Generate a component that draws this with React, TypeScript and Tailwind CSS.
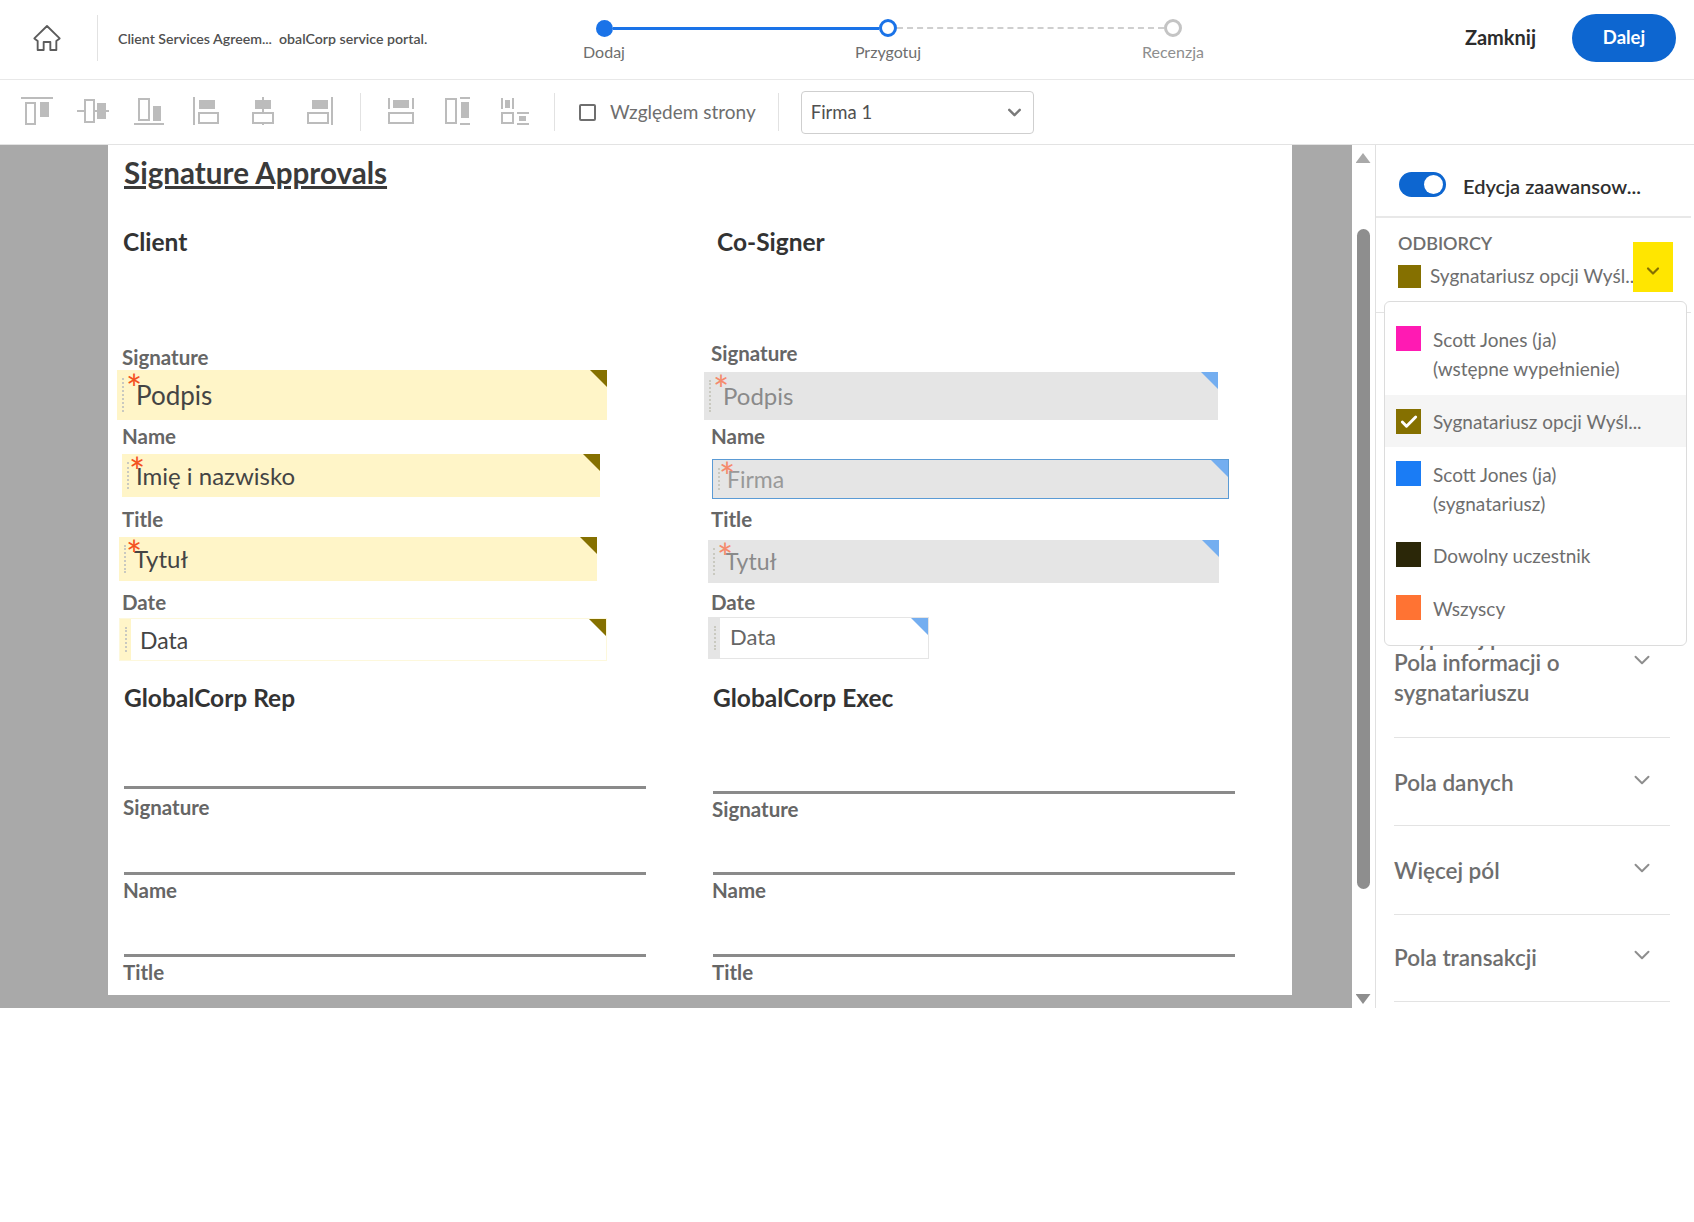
import { ChevronDown, Check } from "lucide-react";

const ui = "font-['Lato','Noto_Sans',sans-serif]";

function ToolIcon({ children }: { children: React.ReactNode }) {
  return (
    <svg width="32" height="28" viewBox="0 0 32 28" fill="none" stroke="#bcbcbc" strokeWidth="2">
      {children}
    </svg>
  );
}

const Solid = (p: { x: number; y: number; w: number; h: number }) => (
  <rect x={p.x} y={p.y} width={p.w} height={p.h} fill="#bcbcbc" stroke="none" />
);
const Outline = (p: { x: number; y: number; w: number; h: number }) => (
  <rect x={p.x} y={p.y} width={p.w} height={p.h} />
);

const toolIcons = [
  <>
    <path d="M0 1h32" />
    <Outline x={5} y={6} w={9} h={21} />
    <Solid x={19} y={5} w={9} h={15} />
  </>,
  <>
    <path d="M0 14h32" />
    <rect x={8} y={3} width={9} height={22} fill="#fff" />
    <Solid x={20} y={6} w={9} h={16} />
  </>,
  <>
    <path d="M1 27h30" />
    <Outline x={6} y={2} w={10} h={21} />
    <Solid x={20} y={9} w={8} h={15} />
  </>,
  <>
    <path d="M5 0v28" />
    <Solid x={10} y={3} w={16} h={9} />
    <Outline x={10} y={16} w={19} h={10} />
  </>,
  <>
    <path d="M18 0v3M18 12v4M18 26v2" />
    <Solid x={10} y={3} w={16} h={9} />
    <Outline x={8} y={16} w={20} h={10} />
  </>,
  <>
    <path d="M31 0v28" />
    <Solid x={11} y={3} w={16} h={9} />
    <Outline x={7} y={16} w={20} h={10} />
  </>,
  <>
    <path d="M4 1v11M28 1v11" />
    <Solid x={8} y={3} w={16} h={8} />
    <Outline x={4} y={16} w={24} h={10} />
  </>,
  <>
    <path d="M18 1h10M18 27h10" />
    <Outline x={4} y={2} w={10} h={24} />
    <Solid x={19} y={5} w={8} h={16} />
  </>,
  <>
    <path d="M3 1v11M14 1v11M18 27h12M18 16h12" />
    <Solid x={6} y={3} w={5} h={8} />
    <Outline x={3} y={16} w={11} h={10} />
    <Solid x={20} y={19} w={7} h={5} />
  </>,
];

type FieldProps = {
  text: string;
  place: string;
  tone: "yellow" | "gray" | "yellowOpen" | "grayOpen" | "selected";
  required?: boolean;
  size?: string;
  textPlace?: string;
  starPlace?: string;
};

function Field({ text, place, tone, required, size = "text-[24px]", textPlace = "ml-[19px]", starPlace = "left-[7px] top-[-2px]" }: FieldProps) {
  const isYellow = tone === "yellow" || tone === "yellowOpen";
  const bg = {
    yellow: "bg-[#fff5c8]",
    yellowOpen: "bg-white border border-[#fdf8dc]",
    gray: "bg-[#e5e5e5]",
    grayOpen: "bg-white border border-[#e5e5e5]",
    selected: "bg-[#e5e5e5] border border-[#5b9bd5]",
  }[tone];
  const ink = isYellow ? "text-[#444]" : tone === "grayOpen" ? "text-[#666]" : tone === "gray" ? "text-[#8a8a8a]" : "text-[#999]";
  return (
    <div className={`relative flex items-center shrink-0 ${bg} ${place}`}>
      {(tone === "yellowOpen" || tone === "grayOpen") && (
        <div className={`absolute left-0 inset-y-0 w-[11px] ${tone === "yellowOpen" ? "bg-[#fff5c8]" : "bg-[#e5e5e5]"}`} />
      )}
      <div className="absolute left-[5px] top-[8px] bottom-[8px] border-l-2 border-dotted border-[#c9c9c0]" />
      <span className={`relative ${ui} ${size} ${ink} ${textPlace}`}>{text}</span>
      {required && (
        <span className={`absolute ${starPlace} text-[38px] leading-[38px] ${isYellow ? "text-[#f4511e]" : "text-[#f58a6c]"} ${ui}`}>*</span>
      )}
      <div
        className={`absolute top-0 right-0 w-[17px] h-[17px] [clip-path:polygon(0_0,100%_0,100%_100%)] ${isYellow ? "bg-[#857000]" : "bg-[#74aef0]"}`}
      />
    </div>
  );
}

function DocLabel({ text, className }: { text: string; className: string }) {
  return <div className={`h-[24px] leading-[24px] text-[20.5px] font-bold text-[#666] ${ui} ${className}`}>{text}</div>;
}

function DocHeading({ text, className }: { text: string; className: string }) {
  return <div className={`h-[34px] leading-[34px] text-[24.5px] font-bold text-[#333] ${ui} ${className}`}>{text}</div>;
}

function Rule({ className }: { className: string }) {
  return <div className={`h-[3px] w-[522px] bg-[#8a8a8a] ${className}`} />;
}

function Step({ label, ink, children }: { label: string; ink: string; children: React.ReactNode }) {
  return (
    <div className="relative w-[18px] h-[18px] flex items-center justify-center">
      {children}
      <span className={`absolute top-[23px] left-1/2 -translate-x-1/2 text-[16px] leading-[20px] whitespace-nowrap ${ink}`}>{label}</span>
    </div>
  );
}

function Recipient({ color, lines, selected }: { color: string; lines: string[]; selected?: boolean }) {
  return (
    <div className={`flex gap-[12px] pl-[11px] ${selected ? "bg-[#f5f5f5] py-[14px] h-[52px]" : ""}`}>
      <div className={`w-[25px] h-[25px] shrink-0 flex items-center justify-center ${color}`}>
        {selected && <Check size={20} color="#fff" strokeWidth={3.5} />}
      </div>
      <div className={`text-[19px] text-[#6e6e6e] leading-[29px] ${selected ? "-mt-[2px]" : "-mt-[1px]"}`}>
        {lines.map((l) => (
          <div key={l} className="whitespace-nowrap">{l}</div>
        ))}
      </div>
    </div>
  );
}

function Accordion({ lines, place }: { lines: string[]; place: string }) {
  return (
    <div className={`flex justify-between border-b border-[#e3e3e3] w-[276px] ml-[18px] ${place}`}>
      <div className="text-[22.5px] leading-[30px] font-semibold text-[#6e6e6e]">
        {lines.map((l) => (
          <div key={l} className="whitespace-nowrap">{l}</div>
        ))}
      </div>
      <ChevronDown size={26} color="#8e8e8e" strokeWidth={1.8} className="mr-[15px] -mt-[1px]" />
    </div>
  );
}

export default function App() {
  return (
    <div className={`w-[1694px] h-[1222px] bg-white overflow-hidden ${ui}`}>
      {/* top bar */}
      <header className="relative h-[80px] flex items-center border-b border-[#e8e8e8]">
        <div className="w-[97px] flex justify-center pr-[3px] -mt-[4px]">
          <svg width="32" height="32" viewBox="0 0 24 24" fill="none" stroke="#5c5c5c" strokeWidth="1.4" strokeLinejoin="round">
            <path d="M12 3 2.5 12.3 5 14.2V21h4.5v-6h5v6H19v-6.8l2.5-1.9Z" />
          </svg>
        </div>
        <div className="w-px h-[46px] bg-[#e2e2e2] -mt-[4px]" />
        <div className="ml-[20px] -mt-[2px] text-[14.15px] font-semibold text-[#505050] whitespace-pre">Client Services Agreem...  obalCorp service portal.</div>

        <div className="absolute left-[595px] top-[19px] flex items-center">
          <Step label="Dodaj" ink="text-[#6e6e6e]">
            <div className="w-[17px] h-[17px] rounded-full bg-[#1a73e8]" />
          </Step>
          <div className="w-[266px] h-[3px] bg-[#1a73e8]" />
          <Step label="Przygotuj" ink="text-[#6e6e6e]">
            <div className="w-[18px] h-[18px] rounded-full border-[3px] border-[#1a73e8] bg-white" />
          </Step>
          <div className="w-[267px] border-t-2 border-dashed border-[#cfcfcf]" />
          <Step label="Recenzja" ink="text-[#8e8e8e]">
            <div className="w-[18px] h-[18px] rounded-full border-[3px] border-[#c4c4c4] bg-white" />
          </Step>
        </div>

        <div className="ml-auto flex items-center -mt-[3px]">
          <span className="text-[20px] font-bold text-[#2c2c2c] mr-[36px] -mt-[2px]">Zamknij</span>
          <button className="w-[104px] h-[48px] rounded-full bg-[#0d66d0] text-white text-[18.5px] font-bold mr-[18px]">Dalej</button>
        </div>
      </header>

      {/* toolbar */}
      <div className="h-[65px] flex items-center border-b border-[#e3e3e3]">
        <div className="flex gap-[24px] ml-[21px] -mt-[2px]">
          {toolIcons.slice(0, 6).map((icon, i) => (
            <ToolIcon key={i}>{icon}</ToolIcon>
          ))}
        </div>
        <div className="w-px h-[38px] bg-[#e2e2e2] ml-[27px]" />
        <div className="flex gap-[25px] ml-[24px] -mt-[2px]">
          {toolIcons.slice(6).map((icon, i) => (
            <ToolIcon key={i}>{icon}</ToolIcon>
          ))}
        </div>
        <div className="w-px h-[38px] bg-[#e2e2e2] ml-[23px]" />
        <div className="w-[17px] h-[17px] border-2 border-[#6e6e6e] rounded-[2px] ml-[24px]" />
        <span className="ml-[14px] text-[19px] text-[#6e6e6e]">Względem strony</span>
        <div className="w-px h-[38px] bg-[#e2e2e2] ml-[22px]" />
        <div className="ml-[22px] w-[233px] h-[43px] border border-[#cfcfcf] rounded-[4px] flex items-center justify-between pl-[9px] pr-[8px]">
          <span className="text-[18.5px] text-[#505050] mt-[2px]">Firma 1</span>
          <ChevronDown size={21} color="#7a7a7a" strokeWidth={2.8} />
        </div>
      </div>

      <div className="flex h-[863px]">
        {/* document area */}
        <div className="w-[1352px] shrink-0 bg-[#a9a9a9] pl-[108px]">
          <div className="w-[1184px] h-[850px] bg-white overflow-hidden">
            <div className="ml-[16px] mt-[10px] text-[29.6px] leading-[36px] font-bold text-[#3a3a3a] underline decoration-[3px] underline-offset-2">Signature Approvals</div>
            <div className="flex mt-[34px]">
              <div className="w-[596px] shrink-0 flex flex-col">
                <DocHeading text="Client" className="ml-[15px]" />
                <DocLabel text="Signature" className="mt-[86px] ml-[14px]" />
                <Field text="Podpis" tone="yellow" required size="text-[26px]" place="mt-[1px] ml-[9px] w-[490px] h-[50px]" starPlace="left-[9px] top-[-1px]" />
                <DocLabel text="Name" className="mt-[4px] ml-[14px]" />
                <Field text="Imię i nazwisko" tone="yellow" required textPlace="ml-[14px]" place="mt-[6px] ml-[14px] w-[478px] h-[43px]" />
                <DocLabel text="Title" className="mt-[10px] ml-[14px]" />
                <Field text="Tytuł" tone="yellow" required textPlace="ml-[15px]" place="mt-[6px] ml-[11px] w-[478px] h-[44px]" />
                <DocLabel text="Date" className="mt-[9px] ml-[14px]" />
                <Field text="Data" tone="yellowOpen" size="text-[23px]" textPlace="ml-[20px] mt-[2px]" place="mt-[4px] ml-[11px] w-[488px] h-[43px]" />
                <DocHeading text="GlobalCorp Rep" className="mt-[20px] ml-[16px]" />
                <Rule className="mt-[71px] ml-[16px]" />
                <DocLabel text="Signature" className="mt-[6px] ml-[15px]" />
                <Rule className="mt-[53px] ml-[16px]" />
                <DocLabel text="Name" className="mt-[3px] ml-[15px]" />
                <Rule className="mt-[52px] ml-[16px]" />
                <DocLabel text="Title" className="mt-[3px] ml-[15px]" />
              </div>
              <div className="flex-1 flex flex-col">
                <DocHeading text="Co-Signer" className="ml-[13px]" />
                <DocLabel text="Signature" className="mt-[82px] ml-[7px]" />
                <Field text="Podpis" tone="gray" required place="mt-[7px] w-[514px] h-[48px]" starPlace="left-[9px] top-[-2px]" />
                <DocLabel text="Name" className="mt-[4px] ml-[7px]" />
                <Field text="Firma" tone="selected" required size="text-[23px]" textPlace="ml-[14px]" place="mt-[11px] ml-[8px] w-[517px] h-[40px]" starPlace="left-[6px] top-[-3px]" />
                <DocLabel text="Title" className="mt-[8px] ml-[7px]" />
                <Field text="Tytuł" tone="gray" required size="text-[23px]" textPlace="ml-[17px]" place="mt-[9px] ml-[4px] w-[511px] h-[43px]" starPlace="left-[9px] top-[-2px]" />
                <DocLabel text="Date" className="mt-[7px] ml-[7px]" />
                <Field text="Data" tone="grayOpen" size="text-[22px]" textPlace="ml-[21px] -mt-[3px]" place="mt-[3px] ml-[4px] w-[221px] h-[42px]" />
                <DocHeading text="GlobalCorp Exec" className="mt-[22px] ml-[9px]" />
                <Rule className="mt-[76px] ml-[9px]" />
                <DocLabel text="Signature" className="mt-[3px] ml-[8px]" />
                <Rule className="mt-[51px] ml-[9px]" />
                <DocLabel text="Name" className="mt-[3px] ml-[8px]" />
                <Rule className="mt-[52px] ml-[9px]" />
                <DocLabel text="Title" className="mt-[3px] ml-[8px]" />
              </div>
            </div>
          </div>
        </div>

        {/* scrollbar */}
        <div className="w-[24px] shrink-0 border-r border-[#e0e0e0] flex flex-col items-center pt-[8px] pr-[1px]">
          <div className="w-[15px] h-[10px] bg-[#a9a9a9] [clip-path:polygon(50%_0,100%_100%,0_100%)]" />
          <div className="w-[13px] h-[660px] mt-[66px] rounded-full bg-[#8e8e8e]" />
          <div className="w-[15px] h-[10px] mt-[105px] bg-[#8e8e8e] [clip-path:polygon(0_0,100%_0,50%_100%)]" />
        </div>

        {/* right panel */}
        <aside className="relative flex-1 overflow-hidden">
          <div className="h-[73px] flex items-center border-b-2 border-[#e8e8e8] mr-[3px] pl-[23px] pt-[10px]">
            <div className="relative w-[47px] h-[25px] rounded-full bg-[#0d66d0] mt-[-2px]">
              <div className="absolute right-[3px] top-[3px] w-[19px] h-[19px] rounded-full bg-white" />
            </div>
            <span className="ml-[17px] text-[20px] font-semibold text-[#2f2f2f]">Edycja zaawansow...</span>
          </div>
          <div className="relative h-[95px] border-b border-[#e3e3e3] pl-[22px] pt-[13px] mr-[3px]">
            <div className="text-[18px] leading-[24px] font-semibold text-[#6e6e6e]">ODBIORCY</div>
            <div className="flex items-center mt-[9px]">
              <div className="w-[23px] h-[23px] bg-[#857000]" />
              <span className="ml-[9px] text-[19px] leading-[24px] text-[#6e6e6e] whitespace-nowrap">Sygnatariusz opcji Wyśl...</span>
            </div>
            <div className="absolute left-[257px] top-[24px] w-[40px] h-[50px] bg-[#ffe600] flex items-center justify-center">
              <ChevronDown size={20} color="#857000" strokeWidth={2.6} className="mt-[8px]" />
            </div>
          </div>

          <div className="pt-[310px] flex flex-col">
            <Accordion lines={["Wypełnij pola"]} place="h-[22px]" />
          </div>
          <div className="flex flex-col">
            <Accordion lines={["Pola informacji o", "sygnatariuszu"]} place="h-[93px] pt-[3px]" />
            <Accordion lines={["Pola danych"]} place="h-[88px] pt-[30px]" />
            <Accordion lines={["Więcej pól"]} place="h-[89px] pt-[30px]" />
            <Accordion lines={["Pola transakcji"]} place="h-[87px] pt-[28px]" />
          </div>

          {/* recipients menu */}
          <div className="absolute left-[8px] top-[156px] w-[303px] h-[345px] bg-white border border-[#dcdcdc] rounded-[6px] pt-[24px]">
            <Recipient color="bg-[#ff1ab3]" lines={["Scott Jones (ja)", "(wstępne wypełnienie)"]} />
            <div className="mt-[12px]">
              <Recipient selected color="bg-[#857000]" lines={["Sygnatariusz opcji Wyśl..."]} />
            </div>
            <div className="mt-[14px]">
              <Recipient color="bg-[#1a7cf5]" lines={["Scott Jones (ja)", "(sygnatariusz)"]} />
            </div>
            <div className="mt-[24px]">
              <Recipient color="bg-[#2b2708]" lines={["Dowolny uczestnik"]} />
            </div>
            <div className="mt-[25px]">
              <Recipient color="bg-[#ff7333]" lines={["Wszyscy"]} />
            </div>
          </div>
        </aside>
      </div>
    </div>
  );
}
